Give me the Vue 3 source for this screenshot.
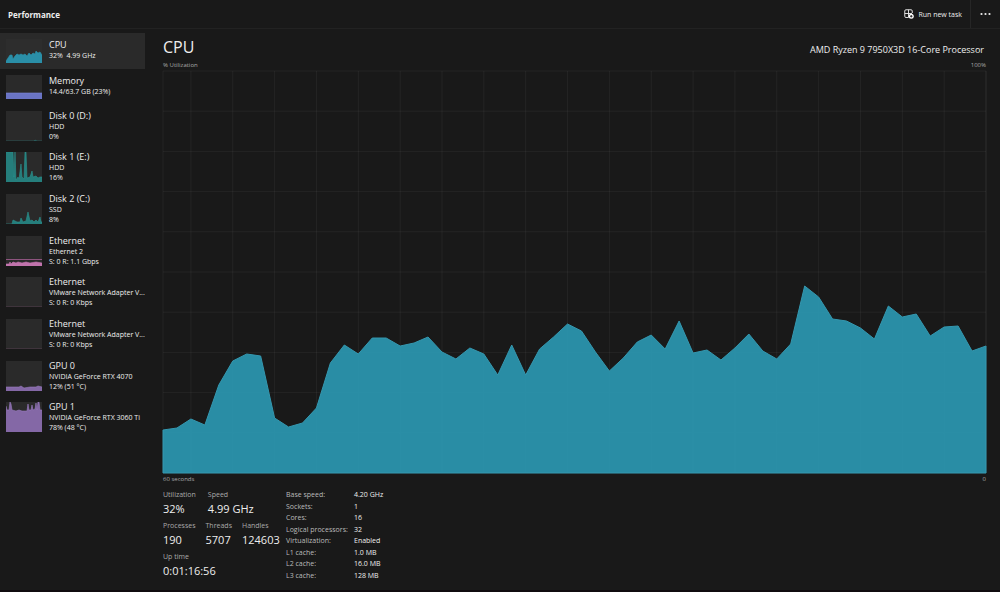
<script setup>
const usage = [
  43, 45, 54, 48, 88, 112, 119, 117, 55, 46, 50, 65, 110, 128, 119, 135, 135, 127, 130, 136,
  121, 114, 125, 119, 98, 128, 98, 124, 136, 149, 142, 121, 102, 115, 131, 138, 124, 152, 120, 123,
  113, 125, 139, 122, 114, 129, 187, 176, 154, 152, 145, 134, 167, 156, 159, 137, 146, 147, 122, 127
]
const W = 826
const H = 402
const step = W / 59
const line = usage.map((v, i) => `${(i * step).toFixed(1)},${H - v}`).join(' ')
const area = `0,${H} ${line} ${W},${H}`
const columns = [0, ...Array.from({ length: 20 }, (_, i) => (2 + i * 3) * step), W]
const rows = Array.from({ length: 11 }, (_, i) => i * H / 10)

const devices = [
  { name: 'CPU', lines: ['32%  4.99 GHz'], color: '#2a93ab', fill: '#2a8fa8', size: 24, points: '0,22 2,19 4,16 6,16 7,20 9,17 11,15 13,16 15,15 17,16 19,15 21,17 23,14 25,16 27,14 29,15 30,12 32,14 34,13 36,16' },
  { name: 'Memory', lines: ['14.4/63.7 GB (23%)'], color: '#7c86d8', fill: '#6a74c4', size: 24, points: '0,18 36,18' },
  { name: 'Disk 0 (D:)', lines: ['HDD', '0%'], color: '#2a6b6b', fill: '#245c5c', size: 30, points: '0,30 28,30 29,29 31,30 36,30' },
  { name: 'Disk 1 (E:)', lines: ['HDD', '16%'], color: '#2a9390', fill: '#257e7c', size: 30, points: '0,0 7,0 8,25 9,0 10,28 12,25 13,27 15,12 16,25 18,27 19,0 20,0 21,26 24,25 26,19 27,25 30,24 32,26 34,25 36,25' },
  { name: 'Disk 2 (C:)', lines: ['SSD', '8%'], color: '#2a9390', fill: '#257e7c', size: 30, points: '0,30 6,30 7,26 9,27 11,28 14,28 15,24 17,28 20,27 22,18 24,27 26,26 28,28 30,26 32,28 34,23 35,28 36,28' },
  { name: 'Ethernet', lines: ['Ethernet 2', 'S: 0 R: 1.1 Gbps'], color: '#c878b4', fill: '#c173ac', size: 30, points: '0,28 3,28 4,26 5,28 7,26 10,27 12,26 16,27 20,26 24,27 30,26 36,27', marker: 23 },
  { name: 'Ethernet', lines: ['VMware Network Adapter V...', 'S: 0 R: 0 Kbps'], color: '#734c69', fill: '#734c69', size: 30, points: '0,30 36,30' },
  { name: 'Ethernet', lines: ['VMware Network Adapter V...', 'S: 0 R: 0 Kbps'], color: '#734c69', fill: '#734c69', size: 30, points: '0,30 36,30' },
  { name: 'GPU 0', lines: ['NVIDIA GeForce RTX 4070', '12% (51 °C)'], color: '#9a7bc0', fill: '#8468a6', size: 30, points: '0,26 13,26 15,25 18,27 24,26 30,26 32,25 36,26' },
  { name: 'GPU 1', lines: ['NVIDIA GeForce RTX 3060 Ti', '78% (48 °C)'], color: '#9a7bc0', fill: '#8468a6', size: 30, points: '0,4 1,8 3,8 4,0 5,2 6,8 10,9 13,8 16,9 20,9 21,9 22,2 23,8 25,8 26,3 27,8 29,7 30,1 31,8 32,0 33,0 34,8 35,8 36,8' }
]
const groups = [
  [{ label: 'Utilization', value: '32%' }, { label: 'Speed', value: '4.99 GHz' }],
  [{ label: 'Processes', value: '190' }, { label: 'Threads', value: '5707' }, { label: 'Handles', value: '124603' }],
  [{ label: 'Up time', value: '0:01:16:56' }]
]
const specs = [
  ['Base speed:', '4.20 GHz'], ['Sockets:', '1'], ['Cores:', '16'], ['Logical processors:', '32'],
  ['Virtualization:', 'Enabled'], ['L1 cache:', '1.0 MB'], ['L2 cache:', '16.0 MB'], ['L3 cache:', '128 MB']
]
</script>

<template>
  <div class="window">
    <header class="topbar">
      <h1>Performance</h1>
      <button class="run" type="button">
        <svg width="10" height="10" viewBox="0 0 20 20" fill="none" stroke="#eee" stroke-width="1.8" aria-hidden="true">
          <path d="M9 17H4a2.500 2.500 0 0 1-2.500-2.500V4A2.500 2.500 0 0 1 4 1.500h10A2.500 2.500 0 0 1 16.500 4v4M9 1.500V17M1.500 9H16" />
          <circle cx="14.500" cy="14.500" r="5" fill="#fff" stroke="none" />
          <path d="M14.500 12v5M12 14.500h5" stroke="#1a1a1a" />
        </svg>
        <span>Run new task</span>
      </button>
      <button class="more" type="button" aria-label="More options">
        <svg width="11" height="4" viewBox="0 0 11 4" fill="#eee"><circle cx="1.500" cy="2" r="1.100" /><circle cx="5.500" cy="2" r="1.100" /><circle cx="9.500" cy="2" r="1.100" /></svg>
      </button>
    </header>
    <div class="body">
      <nav class="devices" aria-label="Devices">
        <button v-for="(d, i) in devices" :key="i" type="button" class="device" :class="{ active: i === 0, short: d.lines.length === 1 }">
          <svg class="thumb" width="36" :height="d.size" :viewBox="`0 0 36 ${d.size}`" aria-hidden="true">
            <rect width="36" :height="d.size" :fill="i === 0 ? '#2d2d2d' : '#2a2a2a'" />
            <polygon :points="`0,${d.size} ${d.points} 36,${d.size}`" :fill="d.fill" />
            <polyline :points="d.points" fill="none" :stroke="d.color" stroke-opacity="0.6" />
            <path v-if="d.marker" :d="`M0 ${d.marker}.5H36`" stroke="#8d547e" />
          </svg>
          <span class="info">
            <span class="name">{{ d.name }}</span>
            <span v-for="l in d.lines" :key="l" class="detail">{{ l }}</span>
          </span>
        </button>
      </nav>
      <main class="content">
        <div class="heading">
          <h2>CPU</h2>
          <span class="model">AMD Ryzen 9 7950X3D 16-Core Processor</span>
        </div>
        <div class="axis top"><span>% Utilization</span><span>100%</span></div>
        <svg class="chart" :viewBox="`0 0 ${W} ${H}`" preserveAspectRatio="none" role="img" aria-label="CPU utilization over 60 seconds">
          <g class="grid">
            <line v-for="x in columns" :key="'c' + x" :x1="x" :x2="x" y1="0" :y2="H" />
            <line v-for="y in rows" :key="'r' + y" x1="0" :x2="W" :y1="y" :y2="y" />
          </g>
          <polygon :points="area" class="area" />
        </svg>
        <div class="axis bottom"><span>60 seconds</span><span>0</span></div>
        <div class="stats">
          <div class="figures">
            <dl v-for="(g, i) in groups" :key="i" class="row" :class="{ wide: i === 0 }">
              <div v-for="s in g" :key="s.label"><dt>{{ s.label }}</dt><dd>{{ s.value }}</dd></div>
            </dl>
          </div>
          <table class="specs">
            <tbody>
              <tr v-for="s in specs" :key="s[0]"><th scope="row">{{ s[0] }}</th><td>{{ s[1] }}</td></tr>
            </tbody>
          </table>
        </div>
      </main>
    </div>
  </div>
</template>

<style>
body { background: #191919; }
</style>

<style scoped>
.window { display: flex; flex-direction: column; box-sizing: border-box; min-height: 100vh; background: #191919; color: #eee; font-family: "Open Sans", "Noto Sans", sans-serif; border-bottom: 2px solid #100c0f; }
h1, h2, dl, dd { margin: 0; font-weight: 400; }
button { border: 0; background: none; color: inherit; font: inherit; padding: 0; }
.topbar { display: flex; align-items: center; height: 28px; border-bottom: 1px solid #222; padding-left: 8px; }
h1 { flex: 1; font-size: 8px; font-weight: 700; }
.run { display: flex; align-items: center; gap: 4px; font-size: 7px; padding-right: 8px; height: 28px; border-right: 1px solid #262626; }
.more { display: flex; align-items: center; justify-content: center; width: 29px; height: 28px; }
.body { display: flex; flex: 1; }
.devices { flex: 0 0 145px; align-self: flex-start; display: grid; grid-template-rows: 36px 36px repeat(8, 1fr); min-height: 405px; padding-top: 4px; }
.device { display: flex; align-items: center; gap: 7px; width: 100%; padding-left: 6px; text-align: left; }
.device.short .info { padding-bottom: 3px; }
.device.active { background: #2a2a2a; }
.thumb { flex: none; }
.info { display: flex; flex-direction: column; min-width: 0; }
.name { font-size: 9px; line-height: 12px; }
.detail { font-size: 7px; line-height: 10px; white-space: pre; }
.content { flex: 1; display: flex; flex-direction: column; min-width: 0; padding: 7px 14px 8px 18px; }
.heading { display: flex; align-items: center; justify-content: space-between; height: 24px; }
h2 { font-size: 16px; line-height: 22px; padding-bottom: 2px; }
.model { font-size: 9px; padding: 3px 2px 0 0; }
.axis { display: flex; justify-content: space-between; font-size: 6px; line-height: 10px; color: #aaa; }
.axis.top { padding-bottom: 1px; }
.axis.bottom { line-height: 12px; }
.chart { display: block; flex: 1; width: 100%; min-height: 200px; overflow: visible; }
.grid { stroke: #fff; stroke-opacity: .05; }
.grid line, .area { vector-effect: non-scaling-stroke; }
.area { fill: #2a92aa; fill-opacity: .97; stroke: #3497af; }
.stats { display: flex; align-items: flex-start; gap: 7px; padding-top: 4px; }
.figures { width: 116px; }
.row { display: flex; gap: 10px; height: 31px; }
.row.wide { gap: 12px; }
dt { font-size: 7px; line-height: 11px; color: #aaa; }
dd { font-size: 11px; line-height: 18px; white-space: nowrap; }
.specs { border-collapse: collapse; height: 92px; font-size: 7px; line-height: 11px; }
.specs th { padding: 0; width: 68px; text-align: left; font-weight: 400; color: #bbb; white-space: nowrap; }
.specs td { padding: 0; white-space: nowrap; }
</style>
